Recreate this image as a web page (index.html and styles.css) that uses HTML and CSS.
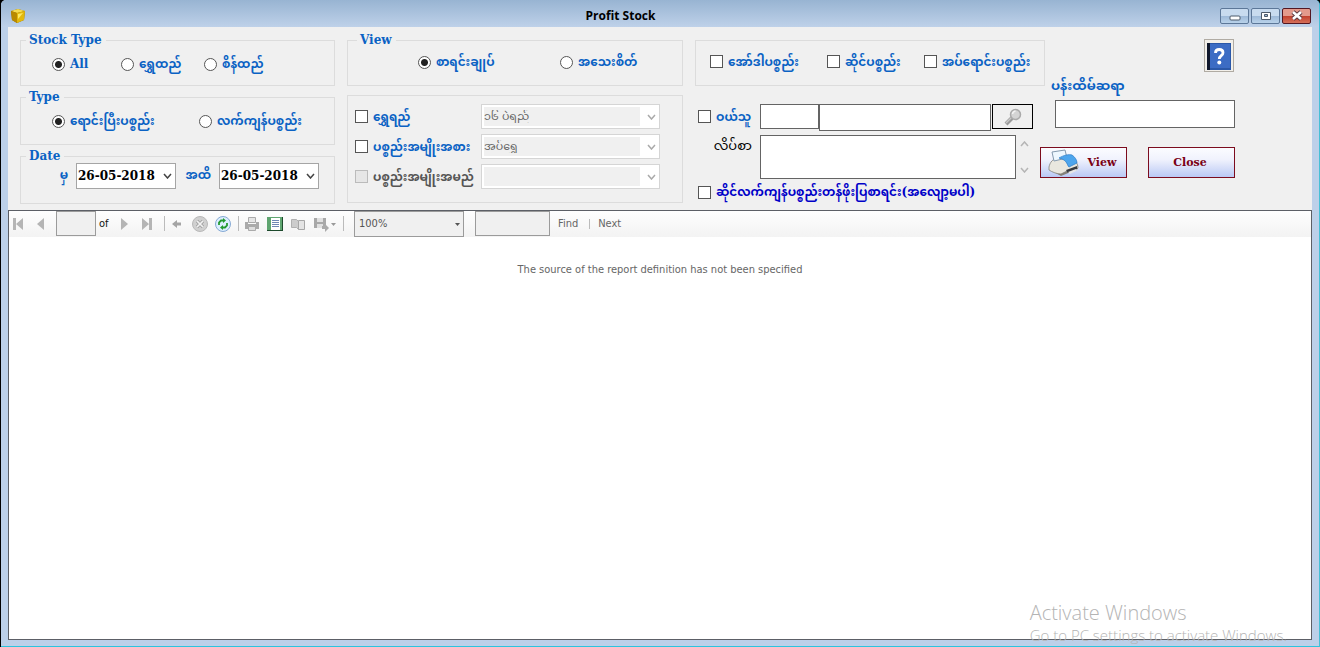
FILE: index.html
```html
<!DOCTYPE html>
<html lang="my">
<head>
<meta charset="utf-8">
<meta name="viewport" content="width=device-width, initial-scale=1">
<title>Profit Stock</title>
<link rel="stylesheet" href="styles.css">
</head>
<body>
<div class="window">
  <header class="titlebar">
    <svg class="app-icon" width="16" height="16" viewBox="0 0 16 16" aria-hidden="true"><path d="M1 3 8 1l7 2-1 9-7 3-5-3z" fill="#8a6400"/><path d="M1 3 8 1l7 2-8 2z" fill="#f5dc50"/><path d="M1 3l6 2v10l-5-3z" fill="#b98a00"/><path d="M7 5l8-2-1 9-7 3z" fill="#e3b90c"/><path d="M8 6l5-1-5 6z" fill="#fbe868"/></svg>
    <h1 class="title">Profit Stock</h1>
    <div class="window-buttons">
      <button class="winbtn" type="button" aria-label="Minimize"><svg width="28" height="15" viewBox="0 0 28 15"><rect x="9" y="7" width="10" height="4" rx="1" fill="#fff" stroke="#4d5a6b"/></svg></button>
      <button class="winbtn" type="button" aria-label="Maximize"><svg width="28" height="15" viewBox="0 0 28 15"><path d="M9.500 3.500h9v7h-9z" fill="#fff" stroke="#4d5a6b"/><path d="M12.500 5.500h3v2h-3z" fill="#9db9d8" stroke="#4d5a6b"/></svg></button>
      <button class="winbtn winbtn-close" type="button" aria-label="Close window"><svg width="28" height="15" viewBox="0 0 28 15"><path d="M10 3l8 7M18 3l-8 7" stroke="#5a3a40" stroke-width="4.500"/><path d="M10 3l8 7M18 3l-8 7" stroke="#fff" stroke-width="2.600"/></svg></button>
    </div>
  </header>

  <main class="client">
    <form class="filters">
      <div class="column">
        <fieldset class="group"><legend>Stock Type</legend>
          <div class="options stock-options">
            <label class="choice"><input type="radio" name="stock" checked><span>All</span></label>
            <label class="choice"><input type="radio" name="stock"><span>ရွှေထည်</span></label>
            <label class="choice"><input type="radio" name="stock"><span>စိန်ထည်</span></label>
          </div>
        </fieldset>
        <fieldset class="group"><legend>Type</legend>
          <div class="options type-options">
            <label class="choice"><input type="radio" name="type" checked><span>ရောင်းပြီးပစ္စည်း</span></label>
            <label class="choice"><input type="radio" name="type"><span>လက်ကျန်ပစ္စည်း</span></label>
          </div>
        </fieldset>
        <fieldset class="group"><legend>Date</legend>
          <div class="dates">
            <label for="from">မှ</label>
            <div class="datebox"><input id="from" type="text" value="26-05-2018"><button type="button" aria-label="Open from date"><svg width="9" height="6" viewBox="0 0 9 6"><path d="M1 1l3.500 4L8 1" fill="none" stroke="#444" stroke-width="1.500"/></svg></button></div>
            <label for="to">အထိ</label>
            <div class="datebox"><input id="to" type="text" value="26-05-2018"><button type="button" aria-label="Open to date"><svg width="9" height="6" viewBox="0 0 9 6"><path d="M1 1l3.500 4L8 1" fill="none" stroke="#444" stroke-width="1.500"/></svg></button></div>
          </div>
        </fieldset>
      </div>

      <div class="column column-view">
        <fieldset class="group"><legend>View</legend>
          <div class="options view-options">
            <label class="choice"><input type="radio" name="view" checked><span>စာရင်းချုပ်</span></label>
            <label class="choice"><input type="radio" name="view"><span>အသေးစိတ်</span></label>
          </div>
        </fieldset>
        <fieldset class="group item-filters" aria-label="Item filters">
          <div class="item-row">
            <label class="choice"><input type="checkbox"><span>ရွှေရည်</span></label>
            <div class="combo"><select aria-label="ရွှေရည်" disabled><option>၁၆ ပဲရည်</option></select><svg width="9" height="6" viewBox="0 0 9 6"><path d="M1 1l3.500 4L8 1" fill="none" stroke="#aaa" stroke-width="1.500"/></svg></div>
          </div>
          <div class="item-row">
            <label class="choice"><input type="checkbox"><span>ပစ္စည်းအမျိုးအစား</span></label>
            <div class="combo"><select aria-label="ပစ္စည်းအမျိုးအစား" disabled><option>အပ်ရွှေ</option></select><svg width="9" height="6" viewBox="0 0 9 6"><path d="M1 1l3.500 4L8 1" fill="none" stroke="#aaa" stroke-width="1.500"/></svg></div>
          </div>
          <div class="item-row">
            <label class="choice choice-off"><input type="checkbox" disabled><span>ပစ္စည်းအမျိုးအမည်</span></label>
            <div class="combo"><select aria-label="ပစ္စည်းအမျိုးအမည်" disabled><option></option></select><svg width="9" height="6" viewBox="0 0 9 6"><path d="M1 1l3.500 4L8 1" fill="none" stroke="#aaa" stroke-width="1.500"/></svg></div>
          </div>
        </fieldset>
      </div>

      <div class="wide">
        <div class="wide-top">
          <fieldset class="group kinds" aria-label="Sale kinds">
            <label class="choice"><input type="checkbox"><span>အော်ဒါပစ္စည်း</span></label>
            <label class="choice"><input type="checkbox"><span>ဆိုင်ပစ္စည်း</span></label>
            <label class="choice"><input type="checkbox"><span>အပ်ရောင်းပစ္စည်း</span></label>
          </fieldset>
          <div class="help-column">
            <button class="help" type="button" aria-label="Help"><svg width="26" height="28" viewBox="0 0 26 28"><path d="M1 1h24v27H1z" fill="#2b58a8"/><path d="M4 2h20v24H4z" fill="#3c6cc4"/><path d="M1 1h3v27H1z" fill="#10182c"/><path d="M9.500 11C9.500 8.500 11 7.500 13.200 7.500c2.300 0 3.800 1.200 3.800 3.200 0 3-3.700 3-3.700 6.300" fill="none" stroke="#fff" stroke-width="2.800"/><circle cx="13.300" cy="20.500" r="2" fill="#fff"/></svg></button>
            <label class="smith-label" for="smith">ပန်းထိမ်ဆရာ</label>
          </div>
        </div>
        <div class="wide-bottom">
          <div class="buyer">
            <div class="buyer-row">
              <label class="choice"><input type="checkbox"><span>ဝယ်သူ</span></label>
              <input class="field code" type="text" aria-label="Buyer code">
              <input class="field name" type="text" aria-label="Buyer name">
              <button class="search" type="button" aria-label="Search buyer"><svg width="18" height="18" viewBox="0 0 18 18"><path d="M2 16l6-6" stroke="#9a9a9a" stroke-width="4"/><path d="M2 15l6-6" stroke="#c8c8c8" stroke-width="1.500"/><circle cx="11.500" cy="6.500" r="5" fill="#d4d4d4" stroke="#aaa" stroke-width="1.500"/><path d="M8.500 6a3.500 3.500 0 0 1 3-3" fill="none" stroke="#f4f4f4" stroke-width="1.500"/></svg></button>
            </div>
            <div class="address-row">
              <label for="address">လိပ်စာ</label>
              <textarea class="field" id="address"></textarea>
              <div class="scroll-arrows"><svg width="9" height="6" viewBox="0 0 9 6"><path d="M1 5l3.500-4L8 5" fill="none" stroke="#b5b5b5" stroke-width="1.500"/></svg><svg width="9" height="6" viewBox="0 0 9 6"><path d="M1 1l3.500 4L8 1" fill="none" stroke="#b5b5b5" stroke-width="1.500"/></svg></div>
            </div>
            <label class="choice balance"><input type="checkbox"><span>ဆိုင်လက်ကျန်ပစ္စည်းတန်ဖိုးပြစာရင်း(အလျော့မပါ)</span></label>
          </div>
          <div class="actions">
            <input class="field smith" id="smith" type="text">
            <div class="action-buttons">
              <button class="action" type="button"><svg width="32" height="28" viewBox="0 0 32 28"><path d="M2 17v4l11 6 17-7v-4z" fill="#85827a"/><path d="M1 18C2 13 5 10 9 9l16 1c3 2 5 5 5 9l-11 3-6 3C9 25 4 23 1 21z" fill="#e9e7df" stroke="#77766e" stroke-width=".7"/><path d="M4 3l13-2 2 8-13 3z" fill="#eef7ff" stroke="#8499ae"/><path d="M11 9c5-3 10-4 13-3 3 2 5 5 5 8l-8 4c-2-1-1-7-10-9z" fill="#4da5ed" stroke="#2879c4" stroke-width=".7"/><path d="M18 21l11-4v4l-9 3z" fill="#373a40"/><path d="M20 23l8-3 2 1-8 4z" fill="#e7e7e7"/></svg><span>View</span></button>
              <button class="action" type="button">Close</button>
            </div>
          </div>
        </div>
      </div>
    </form>

    <section class="viewer">
      <div class="toolbar" role="toolbar" aria-label="Report">
        <button class="tool" type="button" aria-label="First page"><svg width="12" height="14" viewBox="0 0 12 14"><path d="M1 1h3v12H1zM11 1v12L4 7z" fill="#b5b5b5"/></svg></button>
        <button class="tool nav" type="button" aria-label="Previous page"><svg width="8" height="14" viewBox="0 0 8 14"><path d="M7 1v12L0 7z" fill="#b5b5b5"/></svg></button>
        <input class="toolfield page" type="text" aria-label="Page" disabled>
        <span class="of">of</span>
        <button class="tool" type="button" aria-label="Next page"><svg width="8" height="14" viewBox="0 0 8 14"><path d="M1 1v12l7-6z" fill="#b5b5b5"/></svg></button>
        <button class="tool nav" type="button" aria-label="Last page"><svg width="12" height="14" viewBox="0 0 12 14"><path d="M8 1h3v12H8zM1 1v12l7-6z" fill="#b5b5b5"/></svg></button>
        <span class="separator"></span>
        <div class="tool-group">
          <button class="tool" type="button" aria-label="Back"><svg width="14" height="16" viewBox="0 0 14 16"><path d="M1 8l5-4v2.500h4v3H6V12z" fill="#a5a5a5"/></svg></button>
          <button class="tool" type="button" aria-label="Stop"><svg width="16" height="16" viewBox="0 0 16 16"><circle cx="8" cy="8" r="7.500" fill="#d0d0d0" stroke="#b8b8b8"/><path d="M5 5l6 6M11 5l-6 6" stroke="#a2a2a2" stroke-width="3.200"/><path d="M5 5l6 6M11 5l-6 6" stroke="#f2f2f2" stroke-width="1.700"/></svg></button>
          <button class="tool" type="button" aria-label="Refresh"><svg width="16" height="16" viewBox="0 0 16 16"><circle cx="8" cy="8" r="7.500" fill="#dcefff" stroke="#86a9d4"/><path d="M4 9V6.500L6 4.500h2M12 7v2.500L10 11.500H8" fill="none" stroke="#249a31" stroke-width="1.800"/><path d="M8 2l3 2.500L8 7zM8 9l-3 2.500L8 14z" fill="#249a31"/></svg></button>
        </div>
        <span class="separator"></span>
        <div class="tool-group">
          <button class="tool" type="button" aria-label="Print"><svg width="16" height="16" viewBox="0 0 16 16"><path d="M4.500 1.500h7v5h-7z" fill="#e5e5e5" stroke="#aaa"/><path d="M1 6h3v2h8V6h3v7H1z" fill="#aaa"/><path d="M4.500 10.500h7v4h-7z" fill="#ddd" stroke="#aaa"/></svg></button>
          <button class="tool" type="button" aria-label="Print layout"><svg width="16" height="16" viewBox="0 0 16 16"><path d="M0 1h16v14H0z" fill="#1d4a2c"/><path d="M0 1h15v13H0z" fill="#5fa570"/><path d="M4 2h9v12H4z" fill="#fff"/><path d="M5 4.500h7M5 6.500h7M5 8.500h7M5 10.500h7" stroke="#6f87b5"/></svg></button>
          <button class="tool" type="button" aria-label="Page setup"><svg width="16" height="16" viewBox="0 0 16 16"><path d="M1.500 3.500h5l2 2v8l-2-2h-5z" fill="#ccc" stroke="#b0b0b0"/><path d="M8.500 4.500h6v9h-6z" fill="#e4e4e4" stroke="#a7a7a7"/></svg></button>
          <button class="tool" type="button" aria-label="Export"><svg width="23" height="16" viewBox="0 0 23 16"><path d="M1 2h12v10H1z" fill="#a8a8a8"/><path d="M4 2h6v4H4zM4 8h6v4H4z" fill="#e0e0e0"/><path d="M9 10h3V8l4 4-4 4v-3H9z" fill="#aaa"/><path d="M18 7h5l-2.500 3z" fill="#999"/></svg></button>
        </div>
        <span class="separator"></span>
        <div class="zoom"><select class="toolfield" aria-label="Zoom" disabled><option>100%</option></select><svg width="5" height="3" viewBox="0 0 5 3"><path d="M0 0h5L2.500 3z" fill="#555"/></svg></div>
        <input class="toolfield find-field" type="text" aria-label="Find text" disabled>
        <button class="tool find" type="button">Find</button>
        <span class="separator short"></span>
        <button class="tool find" type="button">Next</button>
      </div>
      <p class="message">The source of the report definition has not been specified</p>
    </section>
  </main>
  <aside class="watermark"><strong>Activate Windows</strong><span>Go to PC settings to activate Windows.</span></aside>
</div>
</body>
</html>
```
FILE: styles.css
```css
* { box-sizing: border-box; }
body { margin: 0; background: #000; font-family: "DejaVu Sans Condensed", "Noto Sans", "Noto Sans Myanmar", "Padauk", sans-serif; font-size: 11px; color: #000; }
button, input, select, textarea { font: inherit; color: inherit; margin: 0; border-radius: 0; }
button { padding: 0; border: 0; background: none; }
svg { display: block; flex: none; }

.window { position: relative; display: flex; flex-direction: column; min-height: 100vh; margin-left: 1px; padding: 0 7px 6px 7px; background: #bcd0e9; border-right: 1px solid #45bfd6; border-bottom: 1px solid #2cc4de; border-radius: 5px 5px 0 0; overflow: hidden; }
.titlebar { display: grid; grid-template-columns: 1fr auto 1fr; align-items: center; height: 27px; margin: 0 -7px; padding: 4px 8px 0 9px; background: linear-gradient(#98b4d2, #bed1e9); }
.title { margin: 0 80px 0 0; font: bold 11px "Open Sans", sans-serif; font-size: 12px; }
.window-buttons { display: flex; gap: 2px; justify-self: end; }
.winbtn { width: 29px; height: 16px; border: 1px solid #5c7798; border-radius: 2px; background: linear-gradient(#c8dbef 50%, #9db9d8 50%, #b9d2ea); }
.winbtn-close { border-color: #531722; background: linear-gradient(#e39a8c 50%, #c13f2c 50%, #d5705a); }

.client { flex: 1; display: flex; flex-direction: column; background: #f0f0f0; }
.filters { display: grid; grid-template-columns: 315px 336px 1fr; gap: 12px; padding: 6px 12px; height: 183px; }
.column { display: flex; flex-direction: column; gap: 4px; }
.column-view { gap: 9px; }
.group { margin: 0; padding: 0; min-width: 0; border: 1px solid #dcdcdc; }
.group legend { margin-left: 5px; padding: 0 4px 0 3px; line-height: 14px; }
.column-view legend { margin-left: 9px; }
.group legend, .choice, .dates, .smith-label, .action { font-family: "DejaVu Serif", "Noto Sans Myanmar", serif; font-size: 12px; font-weight: bold; color: #0a62c4; }
.options { display: grid; height: 38px; padding-bottom: 4px; }
.stock-options { grid-template-columns: 69px 83px 1fr; padding-left: 31px; }
.type-options { grid-template-columns: 147px 1fr; height: 40px; padding-left: 31px; padding-bottom: 6px; }
.view-options { grid-template-columns: 142px 1fr; padding-left: 70px; padding-bottom: 8px; }
.choice { display: flex; align-items: center; gap: 5px; white-space: nowrap; line-height: 18px; }
.choice-off { color: #555; }
.choice input { appearance: none; flex: none; width: 13px; height: 13px; border: 1px solid #555; background: #fff; }
.choice input[type="radio"] { border-radius: 50%; }
.choice input[type="radio"]:checked { background: radial-gradient(circle, #222 0 3px, #fff 4px); }
.choice input:disabled { border-color: #bbb; background: #e6e6e6; }

.dates { display: grid; grid-template-columns: 20px 100px 27px 100px; gap: 8px; align-items: center; height: 40px; padding: 0 0 14px 27px; text-align: right; }
.dates label { white-space: nowrap; }
.datebox { display: flex; align-items: center; height: 26px; padding-right: 3px; border: 1px solid #a5a5a5; background: #fff; }
.datebox input { flex: 1; min-width: 0; padding: 0 0 0 1px; border: 0; background: none; font-size: 12px; color: #000; }

.item-filters { display: grid; gap: 5px; padding: 8px 22px 13px 7px; }
.item-row { display: grid; grid-template-columns: 126px 1fr; }
.combo { position: relative; height: 25px; padding: 2px 19px 2px 2px; border: 1px solid #d5d5d5; background: #fff; }
.combo select { appearance: none; display: block; width: 100%; height: 19px; padding: 0; border: 0; background: #f0f0f0; color: #666; font-size: 11px; opacity: 1; }
.combo svg { position: absolute; right: 3px; top: 9px; }

.wide { min-width: 0; padding-top: 6px; }
.wide-top { display: flex; height: 55px; gap: 6px; }
.kinds { display: grid; grid-template-columns: 117px 97px 1fr; width: 350px; height: 46px; margin-top: 1px; padding: 0 0 3px 14px; }
.help-column { display: flex; flex-direction: column; justify-content: space-between; width: 184px; }
.help { align-self: flex-end; display: grid; place-items: center; width: 30px; height: 33px; margin-right: 1px; border: 1px solid #b0aba3; background: #f3f0ea; }
.help-column .smith-label { line-height: 16px; font-size: 13px; }
.wide-bottom { display: flex; gap: 7px; }
.buyer { width: 338px; padding: 10px 0 0 3px; }
.field { border: 1px solid #646464; background: #fff; }
.buyer-row { display: flex; align-items: flex-start; }
.buyer-row .choice { width: 62px; height: 25px; }
.code { width: 59px; height: 25px; }
.name { flex: 1; min-width: 0; height: 27px; margin-right: 1px; }
.search { display: grid; place-items: center; width: 41px; height: 25px; border: 1px solid #000; }
.address-row { display: flex; margin-top: 4px; font-size: 13px; }
.address-row label { width: 62px; padding-right: 8px; text-align: right; line-height: 22px; white-space: nowrap; }
.address-row textarea { width: 257px; height: 44px; resize: none; }
.scroll-arrows { display: flex; flex-direction: column; justify-content: space-between; padding: 6px 4px; }
.buyer .balance { margin-top: 4px; color: #0000c8; }
.actions { display: flex; flex-direction: column; gap: 19px; padding-top: 6px; }
.smith { align-self: flex-end; width: 180px; height: 28px; }
.action-buttons { display: flex; gap: 21px; }
.action-buttons .action { display: flex; align-items: center; justify-content: center; gap: 8px; width: 87px; height: 31px; padding-right: 3px; font-size: 11px; border: 1px solid #7c0c1e; background: linear-gradient(#fbfcff, #f0f2fd 40%, #bac9f5); color: #7a0014; }

.viewer { flex: 1; border: 1px solid #5c5f66; background: #fff; }
.toolbar { display: flex; align-items: center; height: 26px; padding: 0 0 1px 3px; background: linear-gradient(#fefefe, #f3f3f3); color: #666; }
.nav { margin-left: 13px; }
.toolfield { border: 1px solid #9b9b9b; background: #f0f0f0; color: #555; opacity: 1; }
.page { width: 40px; height: 25px; margin-left: 11px; }
.of { width: 24px; padding-left: 3px; color: #111; }
.separator { width: 1px; height: 15px; margin: 0 6px 0 11px; background: #bbb; }
.tool-group { display: flex; gap: 7px; }
.tool-group + .separator { margin: 0 5px 0 7px; }
.zoom { position: relative; width: 110px; margin-left: 5px; }
.zoom select { appearance: none; display: block; width: 100%; height: 26px; padding: 0 4px; }
.zoom svg { position: absolute; right: 4px; top: 12px; }
.find-field { width: 75px; height: 25px; margin: 0 8px 0 11px; }
.short { height: 10px; margin: 0 8px 0 11px; }
.message { margin: 25px 0 0; line-height: 16px; text-align: center; color: #666; }
.watermark { position: absolute; right: 32px; bottom: 2px; display: grid; font-family: "Open Sans", sans-serif; color: #b4b4b4; line-height: 18px; font-size: 15px; font-weight: 300; pointer-events: none; }
.watermark strong { font-size: 20px; font-weight: 300; line-height: 26px; }
```
